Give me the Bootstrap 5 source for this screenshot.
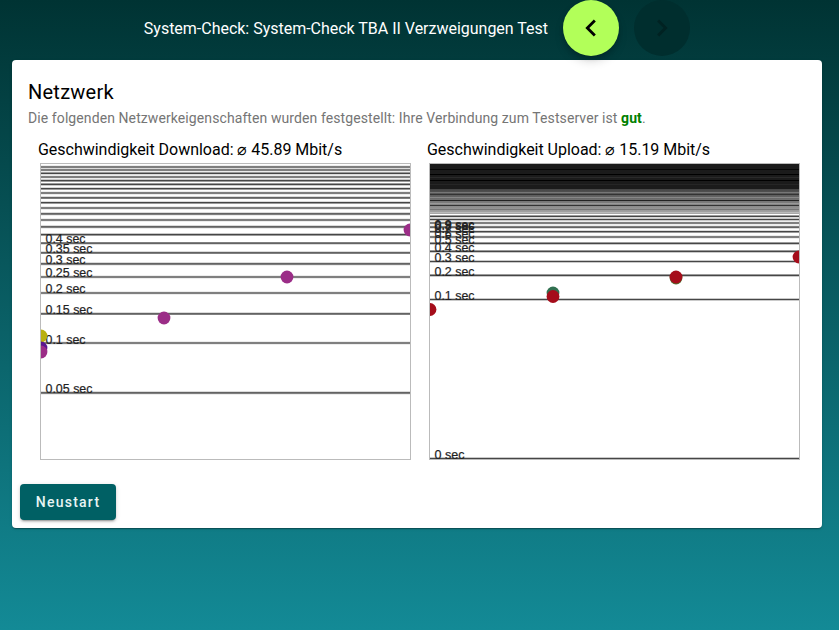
<!DOCTYPE html>
<html lang="de">
<head>
<meta charset="utf-8">
<meta name="viewport" content="width=device-width, initial-scale=1">
<title>System-Check</title>
<link href="https://cdn.jsdelivr.net/npm/bootstrap@5.3.0/dist/css/bootstrap.min.css" rel="stylesheet">
<style>
body{font-family:Roboto,sans-serif;height:630px;overflow:hidden;background:linear-gradient(#003333,#138a96);color:#000}
.topbar{height:60px;padding-right:149px}
.topbar h1{font-size:16px;line-height:24px;font-weight:400;letter-spacing:-.015px;margin:0 15px 0 0;padding-top:17px}
.fab{width:56px;height:56px;border:0}
.fab-back{background:#b2ff59;box-shadow:0 3px 5px -1px #0003,0 6px 10px #0002;margin-right:15px}
.fab-next{background:#002e2e;opacity:1}
.panel{margin:0 17px 0 12px;height:468px;border-radius:4px;box-shadow:0 2px 1px -1px #0003,0 1px 1px #0002,0 1px 3px #0002}
.panel h2{font-size:20px;line-height:32px;font-weight:400;letter-spacing:.25px;margin:0;padding:16px 16px 0}
.intro{font-size:14px;line-height:20px;letter-spacing:.09px;color:#757575;margin:0;padding:0 16px}
.intro b{color:green;font-weight:700}
.plots{padding:12px 0 0 26px}
.plot{width:389px}
.plot h3{font-size:16px;line-height:20px;font-weight:400;letter-spacing:-.025px;margin:0 0 3px}
.plot svg{display:block;margin-left:2px}
.plot svg text{font-family:"Liberation Sans",Arial,sans-serif;font-size:12px;fill:#222;stroke:#222;stroke-width:.2px}
.restart{width:96px;height:36px;margin:24px 0 0 8px;background:#006064;color:#e8f4f4;border:0;border-radius:4px;padding:0;font-size:14px;font-weight:500;letter-spacing:1.25px;box-shadow:0 3px 1px -2px #0003,0 2px 2px #0002,0 1px 5px #0002}
</style>
<script src="https://cdn.jsdelivr.net/npm/bootstrap@5.3.0/dist/js/bootstrap.bundle.min.js"></script>
</head>
<body>
<header class="topbar d-flex justify-content-end align-items-start text-white">
<h1>System-Check: System-Check TBA II Verzweigungen Test</h1>
<button class="fab fab-back rounded-circle p-0 d-flex align-items-center justify-content-center" aria-label="Zurück"><svg width="34" height="34" viewBox="0 0 24 24"><path d="M15.41 7.41 14 6l-6 6 6 6 1.41-1.41L10.83 12z"/></svg></button>
<button class="fab fab-next rounded-circle p-0 d-flex align-items-center justify-content-center" disabled aria-label="Weiter"><svg width="34" height="34" viewBox="0 0 24 24"><path d="M10 6 8.59 7.41 13.17 12l-4.58 4.59L10 18l6-6z" fill="#002222"/></svg></button>
</header>
<main class="panel bg-white">
<h2>Netzwerk</h2>
<p class="intro">Die folgenden Netzwerkeigenschaften wurden festgestellt: Ihre Verbindung zum Testserver ist <b>gut</b>.</p>
<div class="plots d-flex">
<section class="plot"><h3>Geschwindigkeit Download: ⌀ 45.89 Mbit/s</h3>
<svg id="down" width="371" height="297" viewBox="40 163 371 297"></svg></section>
<section class="plot"><h3>Geschwindigkeit Upload: ⌀ 15.19 Mbit/s</h3>
<svg id="up" width="371" height="297" viewBox="429 163 371 297"></svg></section>
</div>
<button class="restart">Neustart</button>
</main>
<script>
function plot(id,x,lines,labels,dots,shade){
  let s=shade||'';
  for(const y of lines)s+=`<path d="M${x} ${y}h371" stroke="#000" stroke-opacity=".28" stroke-width="2.6"/><path d="M${x} ${y}h371" stroke="#000" stroke-opacity=".62" stroke-width="1.2"/>`;
  for(const [t,y] of labels)s+=`<text x="${x+5.5}" y="${y}" textLength="${t.length==8?47:40-(t=='0 sec'?10:0)}" lengthAdjust="spacingAndGlyphs">${t}</text>`;
  for(const [cx,cy,c] of dots)s+=`<circle cx="${cx}" cy="${cy}" r="6.4" fill="${c}"/>`;
  s+=`<rect x="${x+.5}" y="163.5" width="370" height="296" fill="none" stroke="#bbb"/>`;
  document.getElementById(id).innerHTML=s;
}
plot('down',40,[167,170,173.3,177,180.6,184.4,188.7,193,197.8,202.7,208,213.9,220,226.9,234.6,243.2,252.8,263.9,277,293,313.8,343,392.9],
[['0.4 sec',243],['0.35 sec',252.5],['0.3 sec',263.5],['0.25 sec',277],['0.2 sec',293],['0.15 sec',314],['0.1 sec',343.5],['0.05 sec',392.5]],
[[41,336,'#b8b010'],[41,348,'#5a1690'],[41,352,'#9b2d87'],[164,318,'#9b2d87'],[287,277,'#9b2d87'],[410,230,'#9b2d87']]);
// Upload gridlines are so dense at the top that they merge into a shaded band
let band='<defs><linearGradient id="g" x1="0" y1="0" x2="0" y2="1"><stop offset="0" stop-color="#444"/><stop offset="1" stop-color="#aaa"/></linearGradient></defs><rect x="429" y="164" width="371" height="26" fill="#1b1b1b"/><rect x="429" y="189" width="371" height="25" fill="url(#g)"/>';
for(const [y,c] of [[169.5,'#060606'],[174.5,'#000'],[177.5,'#2a2a2a'],[180.5,'#000'],[184.5,'#262626'],[192.5,'#777'],[194.5,'#333'],[197.5,'#888'],[200.5,'#222'],[203.5,'#999'],[205.5,'#333'],[209.5,'#777'],[212.5,'#bbb']])
  band+=`<path d="M429 ${y}h371" stroke="${c}"/>`;
plot('up',429,[458.5,299.5,275.4,261.5,251.4,243.4,237,231.7,227.1,223,219.5,216.3],
[['0 sec',459],['0.1 sec',299.5],['0.2 sec',276],['0.3 sec',261.5],['0.4 sec',251.5],['0.5 sec',244],['0.6 sec',238],['0.7 sec',233],['0.8 sec',230],['0.9 sec',228.5]],
[[430,309.5,'#a50d1b'],[553,293,'#307050'],[553,296.5,'#a50d1b'],[676,278,'#507030'],[676,277,'#a50d1b'],[799,257,'#a50d1b']],band);
</script>
</body>
</html>
